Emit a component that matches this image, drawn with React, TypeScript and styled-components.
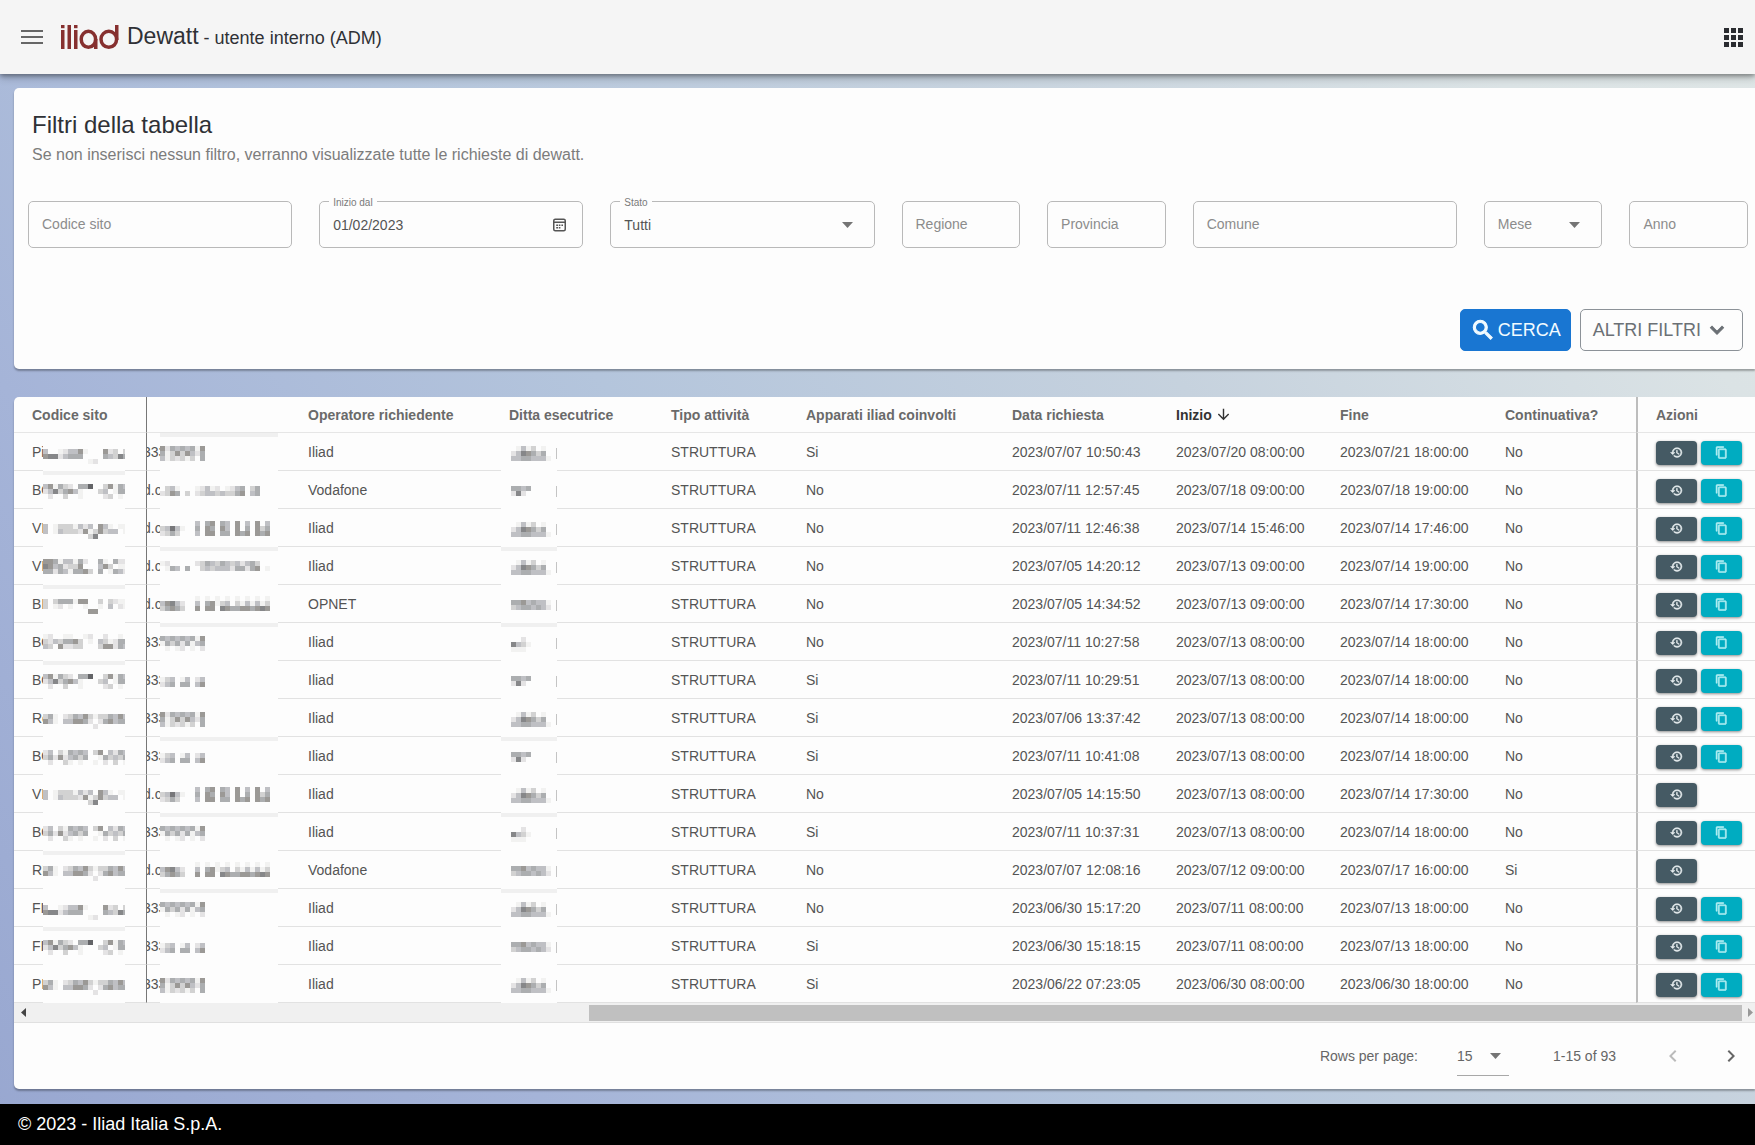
import React from "react";
import styled, { createGlobalStyle } from "styled-components";
import {
  MdArrowDownward,
  MdChevronLeft,
  MdChevronRight,
  MdContentCopy,
  MdExpandMore,
  MdHistory,
  MdSearch,
} from "react-icons/md";

const GlobalStyle = createGlobalStyle`
  *, *::before, *::after { box-sizing: border-box; }
  body {
    margin: 0;
    font-family: "Liberation Sans", Arial, Helvetica, sans-serif;
    font-size: 14px;
    color: #545454;
  }
  button, input, select { font: inherit; color: inherit; }
`;

const Page = styled.div`
  display: flex;
  flex-direction: column;
  min-height: 100vh;
  overflow-x: hidden;
  background: linear-gradient(53deg, #98a7d0 0%, #a5b4d8 22%, #b4c5dc 45%, #c6d2de 67%, #dbe3e5 88%, #dfe6e6 100%);
`;

const TopBar = styled.header`
  display: flex;
  align-items: center;
  height: 74px;
  padding: 0 9px 0 20px;
  background: #f5f5f5;
  box-shadow: 0 2px 4px rgba(0, 0, 0, 0.3), 0 4px 8px rgba(0, 0, 0, 0.2);
`;

const IconButton = styled.button`
  display: flex;
  align-items: center;
  justify-content: center;
  width: 24px;
  height: 24px;
  padding: 0;
  border: 0;
  background: none;
  color: #666;
  cursor: pointer;
  &:disabled { color: #bbb; }
`;

const Logo = styled.svg`
  display: block;
  width: 60px;
  height: 26px;
  margin: 0 7px 0 16px;
`;

const AppName = styled.h1`
  flex: 1;
  margin: 0;
  font-size: 23px;
  font-weight: 400;
  line-height: 28px;
  color: #2f3136;
`;

const UserRole = styled.span`
  font-size: 18px;
`;

const Main = styled.main`
  display: flex;
  flex: 1;
  flex-direction: column;
  gap: 28px;
  padding: 14px 0 15px 14px;
`;

const Card = styled.section`
  overflow: hidden;
  border-radius: 5px 0 0 5px;
  background: #fdfdfd;
  box-shadow: 0 2px 2px rgba(0, 0, 0, 0.3);
`;

const FilterCard = styled(Card)`
  padding: 21px 7px 18px 14px;
`;

const FilterHead = styled.div`
  padding: 0 4px;
`;

const Title = styled.h2`
  margin: 0;
  font-size: 24px;
  font-weight: 400;
  line-height: 32px;
  color: #2f3136;
`;

const Subtitle = styled.p`
  margin: 0;
  font-size: 16px;
  line-height: 28px;
  color: #7c7c7c;
`;

const FilterGrid = styled.div`
  display: grid;
  grid-template-columns: repeat(12, minmax(0, 1fr));
  gap: 27px;
  margin-top: 32px;
`;

const FieldBox = styled.div<{ $span: number }>`
  position: relative;
  grid-column: span ${(p) => p.$span};
`;

const FieldLabel = styled.label<{ $raised?: boolean }>`
  position: absolute;
  left: ${(p) => (p.$raised ? 10 : 14)}px;
  top: ${(p) => (p.$raised ? -5 : 14)}px;
  padding: 0 ${(p) => (p.$raised ? 4 : 0)}px;
  background: #fdfdfd;
  font-size: ${(p) => (p.$raised ? 10 : 14)}px;
  line-height: ${(p) => (p.$raised ? 14 : 18)}px;
  color: ${(p) => (p.$raised ? "#7a7a7a" : "#8c8c8c")};
  pointer-events: none;
`;

const TextInput = styled.input`
  display: block;
  width: 100%;
  height: 47px;
  padding: 0 13px;
  border: 1px solid #b9b9b9;
  border-radius: 5px;
  background: transparent;
`;

const Select = styled.select`
  display: block;
  width: 100%;
  height: 47px;
  padding: 0 32px 0 13px;
  border: 1px solid #b9b9b9;
  border-radius: 5px;
  background: transparent;
  appearance: none;
`;

const FieldIcon = styled.span`
  position: absolute;
  right: 17px;
  top: 0;
  display: flex;
  align-items: center;
  height: 47px;
  color: #555;
  pointer-events: none;
`;

const CaretIcon = styled(FieldIcon)`
  right: 22px;
  color: #757575;
`;

const FilterActions = styled.div`
  display: flex;
  justify-content: flex-end;
  gap: 9px;
  margin-top: 61px;
  padding-right: 5px;
`;

const ActionButton = styled.button<{ $primary?: boolean }>`
  display: flex;
  align-items: center;
  gap: ${(p) => (p.$primary ? 2 : 3)}px;
  height: 42px;
  padding: 0 ${(p) => (p.$primary ? 9 : 12)}px;
  border: 1px solid ${(p) => (p.$primary ? "#1976d2" : "#8c9298")};
  border-radius: 5px;
  background: ${(p) => (p.$primary ? "#1976d2" : "transparent")};
  color: ${(p) => (p.$primary ? "#f2fbff" : "#6b7075")};
  font-size: 18px;
  line-height: 24px;
  text-transform: uppercase;
  cursor: pointer;
  path:not([fill="none"]) { stroke: currentColor; stroke-width: 1; }
`;

const Table = styled.table`
  width: 100%;
  table-layout: fixed;
  border-collapse: separate;
  border-spacing: 0;
`;

const HeadCell = styled.th<{ $sorted?: boolean; $edge?: "left" | "right" }>`
  height: 36px;
  padding: 0 0 0 18px;
  border-bottom: 1px solid #e6e6e6;
  border-right: ${(p) => (p.$edge === "right" ? "1px solid #777" : "0")};
  border-left: ${(p) => (p.$edge === "left" ? "2px solid #bdbdbd" : "0")};
  color: ${(p) => (p.$sorted ? "#333" : "#6a6a6a")};
  text-align: left;
  white-space: nowrap;
`;

const SortLabel = styled.span`
  display: flex;
  align-items: center;
  gap: 3px;
`;

const Cell = styled.td<{ $edge?: "left" | "right"; $flush?: boolean }>`
  position: relative;
  z-index: ${(p) => (p.$edge ? 1 : 0)};
  height: 38px;
  padding: 0 0 0 ${(p) => (p.$flush ? 0 : 18)}px;
  border-bottom: 1px solid #e2e2e2;
  border-right: ${(p) => (p.$edge === "right" ? "1px solid #777" : "0")};
  border-left: ${(p) => (p.$edge === "left" ? "2px solid #bdbdbd" : "0")};
  background: #fdfdfd;
  white-space: nowrap;
`;

const ScrolledText = styled.span`
  display: block;
  margin-left: -4px;
`;

const Mask = styled.svg<{ $left: number }>`
  position: absolute;
  left: ${(p) => p.$left}px;
  top: 0;
  display: block;
`;

const RowActions = styled.div`
  display: flex;
  gap: 4px;
  padding-top: 2px;
`;

const RowButton = styled.button<{ $tone: "slate" | "cyan" }>`
  display: flex;
  align-items: center;
  justify-content: center;
  width: 41px;
  height: 24px;
  padding: 0;
  border: 0;
  border-radius: 4px;
  background: ${(p) => (p.$tone === "slate" ? "#455a64" : "#00acc1")};
  box-shadow: 0 1px 3px rgba(0, 0, 0, 0.45);
  color: ${(p) => (p.$tone === "slate" ? "#e8eef0" : "#b8f0f4")};
  cursor: pointer;
  path:not([fill="none"]) { stroke: currentColor; stroke-width: 1; }
`;

const ScrollBar = styled.div`
  display: flex;
  align-items: center;
  height: 20px;
  border-bottom: 1px solid #e0e0e0;
  background: #f0f0f0;
`;

const ScrollArrow = styled.button<{ $end?: boolean }>`
  display: flex;
  align-items: center;
  justify-content: ${(p) => (p.$end ? "flex-end" : "center")};
  width: ${(p) => (p.$end ? 13 : 18)}px;
  height: 16px;
  padding: 0 ${(p) => (p.$end ? 2 : 0)}px 0 0;
  border: 0;
  background: none;
  color: #444;
  &:disabled { color: #999; }
`;

const ScrollTrack = styled.div`
  display: flex;
  flex: 1;
  justify-content: flex-end;
`;

const ScrollThumb = styled.div`
  height: 16px;
  background: #c0c0c0;
`;

const Pagination = styled.div`
  display: flex;
  align-items: center;
  justify-content: flex-end;
  height: 66px;
  padding-right: 12px;
  color: #666;
`;

const PageSize = styled.div`
  position: relative;
  width: 52px;
  margin: 0 44px 0 39px;
`;

const PageSizeSelect = styled.select`
  display: block;
  width: 100%;
  height: 40px;
  padding: 0;
  border: 0;
  border-bottom: 1px solid #a8a8a8;
  background: transparent;
  appearance: none;
`;

const PageSizeCaret = styled.span`
  position: absolute;
  right: 8px;
  top: 0;
  display: flex;
  align-items: center;
  height: 40px;
  color: #757575;
  pointer-events: none;
`;

const PageButtons = styled.div`
  display: flex;
  gap: 34px;
  margin-left: 45px;
`;

const Footer = styled.footer`
  height: 41px;
  padding: 0 18px;
  background: #000;
  color: #fff;
  font-size: 18px;
  line-height: 41px;
`;

const Caret = () => (
  <svg width="11" height="6" viewBox="0 0 11 6" aria-hidden="true">
    <polygon points="0,0 11,0 5.5,6" fill="currentColor" />
  </svg>
);

const CalendarIcon = () => (
  <svg width="13" height="14" viewBox="0 0 13 14" fill="none" stroke="currentColor" aria-hidden="true">
    <rect x="0.75" y="1.25" width="11.5" height="11.5" rx="1.5" strokeWidth="1.5" />
    <path d="M1 4.2H12" strokeWidth="1.5" />
    <path d="M3.2 7.2H5M5.8 7.2H7.4M8.4 7.2H10M3.2 9.8H5M5.8 9.8H7.4" strokeWidth="1.5" />
  </svg>
);

const IliadLogo = () => (
  <Logo viewBox="0 0 60 26" role="img" aria-label="iliad" fill="#86302f">
    <rect x="1" y="1" width="3.5" height="3.2" />
    <rect x="1" y="6" width="3.5" height="19" />
    <rect x="7.5" y="1" width="3.5" height="24" />
    <rect x="14" y="1" width="3.5" height="3.2" />
    <rect x="14" y="6" width="3.5" height="19" />
    <ellipse cx="28.4" cy="15.3" rx="7.2" ry="8" fill="none" stroke="#86302f" strokeWidth="3.5" />
    <rect x="34" y="15" width="3.5" height="10" />
    <ellipse cx="48.8" cy="15.3" rx="7.8" ry="8" fill="none" stroke="#86302f" strokeWidth="3.5" />
    <rect x="55" y="1" width="3.5" height="15" />
  </Logo>
);

const MenuIcon = () => (
  <svg width="22" height="14" viewBox="0 0 22 14" fill="currentColor" aria-hidden="true">
    <rect width="22" height="2" y="0" />
    <rect width="22" height="2" y="6" />
    <rect width="22" height="2" y="12" />
  </svg>
);

const AppsIcon = () => (
  <svg width="20" height="19" viewBox="0 0 20 19" fill="#2a2c30" aria-hidden="true">
    {[0, 7, 14].map((y) => [0, 7, 14].map((x) => <rect key={`${x}-${y}`} x={x} y={y} width="5" height="5" />))}
  </svg>
);

const greys = ["#fdfdfd", "#f2f2f1", "#e4e3e4", "#d2d2d2", "#bfc0c4", "#acaeb0", "#9b9996", "#868789", "#77777a", "#636467"];

type Pattern = { top: number; rows: string[] };

type PixelMaskProps = { left: number; width: number; inset?: number; pattern: Pattern; band?: boolean; tick?: boolean };

const PixelMask = ({ left, width, inset = 0, pattern, band, tick }: PixelMaskProps) => (
  <Mask $left={left} width={width} height={38} aria-hidden="true">
    <rect width={width} height={38} fill="#fdfdfd" />
    {band && <rect width={width} height={4} fill="#f0f0f0" />}
    {pattern.rows.map((row, y) =>
      [...row].map((d, x) =>
        d === "0" ? null : (
          <rect
            key={`${x}-${y}`}
            x={inset + x * 5}
            y={pattern.top + y * 5}
            width={5}
            height={5}
            fill={greys[Number(d)]}
          />
        ),
      ),
    )}
    {tick && <rect x={width - 1} y={15} width={1} height={11} fill="#c4c4c4" />}
  </Mask>
);

const sitePixels: Record<string, Pattern> = {
  a: { top: 16, rows: ["40012446100062303", "67724555000054375", "00000000012000000"] },
  b: { top: 13, rows: ["46153205590036154", "24735641000340155", "02003001000023010"] },
  c: { top: 15, rows: ["40133314240641011", "40143332613634401", "00000000037000000"] },
  d: { top: 12, rows: ["66514415200510522", "76452336000463011", "55254155630501542"] },
  e: { top: 14, rows: ["30355516600303211", "30120100100104021", "00000000066000000"] },
  f: { top: 11, rows: ["12001100120020010", "32435563010431255", "43062233000366254"] },
  g: { top: 13, rows: ["24031545403604254", "35262453500153435", "02003101001020301"] },
  h: { top: 15, rows: ["35102354631335464", "64104466520256455", "00000000002000000"] },
};

const contactPixels: Record<string, Pattern> = {
  tel1: { top: 13, rows: ["625454516", "513636425", "413231305"] },
  tel2: { top: 16, rows: ["134014024", "245055046"] },
  tel3: { top: 13, rows: ["545454516", "153525145", "010120102"] },
  mail1: { top: 15, rows: ["0341000124120124503500", "2365030234434335604500"] },
  mail2: { top: 12, rows: ["0000000405605406040604", "3484100506506406050635", "2353000406605506560656"] },
  mail3: { top: 11, rows: ["0000000101010101010101", "4674200405613403141413", "3565300606607655665676"] },
  mail4: { top: 14, rows: ["1200000235435434245300", "0154050034344425525601"] },
};

const companyPixels: Record<string, Pattern> = {
  long: { top: 13, rows: ["0141301", "2476535", "44554441"] },
  short: { top: 15, rows: ["5545", "2720"] },
  wide: { top: 15, rows: ["55645441", "34554542"] },
  tiny: { top: 14, rows: ["0020", "7431", "1110"] },
};

type Row = {
  code: string;
  site: string;
  contact: string;
  operator: string;
  company: string;
  devices: string;
  requested: string;
  start: string;
  end: string;
  ongoing: string;
  copy: boolean;
};

const row = (
  code: string,
  site: string,
  contact: string,
  operator: string,
  company: string,
  devices: string,
  requested: string,
  start: string,
  end: string,
  ongoing = "No",
  copy = true,
): Row => ({ code, site, contact, operator, company, devices, requested, start, end, ongoing, copy });

const data: Row[] = [
  row("Pi", "a", "tel1", "Iliad", "long", "Si", "2023/07/07 10:50:43", "2023/07/20 08:00:00", "2023/07/21 18:00:00"),
  row("BO", "b", "mail1", "Vodafone", "short", "No", "2023/07/11 12:57:45", "2023/07/18 09:00:00", "2023/07/18 19:00:00"),
  row("VI", "c", "mail2", "Iliad", "long", "No", "2023/07/11 12:46:38", "2023/07/14 15:46:00", "2023/07/14 17:46:00"),
  row("VI", "d", "mail4", "Iliad", "long", "No", "2023/07/05 14:20:12", "2023/07/13 09:00:00", "2023/07/14 19:00:00"),
  row("BI", "e", "mail3", "OPNET", "wide", "No", "2023/07/05 14:34:52", "2023/07/13 09:00:00", "2023/07/14 17:30:00"),
  row("BO", "f", "tel3", "Iliad", "tiny", "No", "2023/07/11 10:27:58", "2023/07/13 08:00:00", "2023/07/14 18:00:00"),
  row("BO", "b", "tel2", "Iliad", "short", "Si", "2023/07/11 10:29:51", "2023/07/13 08:00:00", "2023/07/14 18:00:00"),
  row("Ro", "h", "tel1", "Iliad", "long", "Si", "2023/07/06 13:37:42", "2023/07/13 08:00:00", "2023/07/14 18:00:00"),
  row("BO", "g", "tel2", "Iliad", "short", "Si", "2023/07/11 10:41:08", "2023/07/13 08:00:00", "2023/07/14 18:00:00"),
  row("VI", "c", "mail2", "Iliad", "long", "No", "2023/07/05 14:15:50", "2023/07/13 08:00:00", "2023/07/14 17:30:00", "No", false),
  row("BO", "g", "tel3", "Iliad", "tiny", "Si", "2023/07/11 10:37:31", "2023/07/13 08:00:00", "2023/07/14 18:00:00"),
  row("RI", "h", "mail3", "Vodafone", "wide", "No", "2023/07/07 12:08:16", "2023/07/12 09:00:00", "2023/07/17 16:00:00", "Si", false),
  row("FI", "a", "tel3", "Iliad", "long", "No", "2023/06/30 15:17:20", "2023/07/11 08:00:00", "2023/07/13 18:00:00"),
  row("FI", "b", "tel2", "Iliad", "wide", "Si", "2023/06/30 15:18:15", "2023/07/11 08:00:00", "2023/07/13 18:00:00"),
  row("PI", "h", "tel1", "Iliad", "long", "Si", "2023/06/22 07:23:05", "2023/06/30 08:00:00", "2023/06/30 18:00:00"),
];

const siteBands = [1, 4, 6, 11, 13];
const contactBands = [0, 3, 5, 8, 10, 12];
const companyBands = [3, 5, 8, 10, 12];
const columnWidths = [133, 143, 201, 162, 135, 206, 164, 164, 165, 149, 119];

/* Share of the scroll track taken by the visible part of the table. */
const visibleShare = 0.674;

type FieldProps = { id: string; label: string; span?: number; value?: string; kind?: "text" | "date" | "select" };

const Field = ({ id, label, span = 1, value = "", kind = "text" }: FieldProps) => (
  <FieldBox $span={span}>
    {kind === "select" ? (
      <Select id={id} defaultValue={value}>
        <option value={value}>{value}</option>
      </Select>
    ) : (
      <TextInput id={id} type="text" defaultValue={value} />
    )}
    <FieldLabel htmlFor={id} $raised={value !== ""}>
      {label}
    </FieldLabel>
    {kind === "date" && (
      <FieldIcon>
        <CalendarIcon />
      </FieldIcon>
    )}
    {kind === "select" && (
      <CaretIcon>
        <Caret />
      </CaretIcon>
    )}
  </FieldBox>
);

export default function App() {
  return (
    <Page>
      <GlobalStyle />
      <TopBar>
        <IconButton type="button" aria-label="Menu">
          <MenuIcon />
        </IconButton>
        <IliadLogo />
        <AppName>
          Dewatt<UserRole> - utente interno (ADM)</UserRole>
        </AppName>
        <IconButton type="button" aria-label="App">
          <AppsIcon />
        </IconButton>
      </TopBar>

      <Main>
        <FilterCard>
          <FilterHead>
            <Title>Filtri della tabella</Title>
            <Subtitle>Se non inserisci nessun filtro, verranno visualizzate tutte le richieste di dewatt.</Subtitle>
          </FilterHead>
          <FilterGrid>
            <Field id="codice" label="Codice sito" span={2} />
            <Field id="inizio" label="Inizio dal" span={2} value="01/02/2023" kind="date" />
            <Field id="stato" label="Stato" span={2} value="Tutti" kind="select" />
            <Field id="regione" label="Regione" />
            <Field id="provincia" label="Provincia" />
            <Field id="comune" label="Comune" span={2} />
            <Field id="mese" label="Mese" kind="select" />
            <Field id="anno" label="Anno" />
          </FilterGrid>
          <FilterActions>
            <ActionButton type="button" $primary>
              <MdSearch size={26} />
              Cerca
            </ActionButton>
            <ActionButton type="button">
              Altri filtri
              <MdExpandMore size={26} />
            </ActionButton>
          </FilterActions>
        </FilterCard>

        <Card>
          <Table>
            <colgroup>
              {columnWidths.map((width, i) => (
                <col key={i} width={width} />
              ))}
            </colgroup>
            <thead>
              <tr>
                <HeadCell $edge="right">Codice sito</HeadCell>
                <HeadCell aria-label="Contatto" />
                <HeadCell>Operatore richiedente</HeadCell>
                <HeadCell>Ditta esecutrice</HeadCell>
                <HeadCell>Tipo attività</HeadCell>
                <HeadCell>Apparati iliad coinvolti</HeadCell>
                <HeadCell>Data richiesta</HeadCell>
                <HeadCell $sorted aria-sort="descending">
                  <SortLabel>
                    Inizio
                    <MdArrowDownward size={17} />
                  </SortLabel>
                </HeadCell>
                <HeadCell>Fine</HeadCell>
                <HeadCell>Continuativa?</HeadCell>
                <HeadCell $edge="left">Azioni</HeadCell>
              </tr>
            </thead>
            <tbody>
              {data.map((r, i) => (
                <tr key={i}>
                  <Cell $edge="right">
                    {r.code}
                    <PixelMask left={29} width={82} pattern={sitePixels[r.site]} band={siteBands.includes(i)} />
                  </Cell>
                  <Cell $flush>
                    <ScrolledText>{r.contact.startsWith("tel") ? "333" : "d.c"}</ScrolledText>
                    <PixelMask left={13} width={118} pattern={contactPixels[r.contact]} band={contactBands.includes(i)} />
                  </Cell>
                  <Cell>{r.operator}</Cell>
                  <Cell>
                    <PixelMask
                      left={10}
                      width={56}
                      inset={10}
                      pattern={companyPixels[r.company]}
                      band={companyBands.includes(i)}
                      tick
                    />
                  </Cell>
                  <Cell>STRUTTURA</Cell>
                  <Cell>{r.devices}</Cell>
                  <Cell>{r.requested}</Cell>
                  <Cell>{r.start}</Cell>
                  <Cell>{r.end}</Cell>
                  <Cell>{r.ongoing}</Cell>
                  <Cell $edge="left">
                    <RowActions>
                      <RowButton type="button" $tone="slate" aria-label="Storico">
                        <MdHistory size={13} />
                      </RowButton>
                      {r.copy && (
                        <RowButton type="button" $tone="cyan" aria-label="Copia">
                          <MdContentCopy size={13} />
                        </RowButton>
                      )}
                    </RowActions>
                  </Cell>
                </tr>
              ))}
            </tbody>
          </Table>
          <ScrollBar>
            <ScrollArrow type="button" aria-label="Scorri a sinistra">
              <svg width="5" height="9" viewBox="0 0 5 9" aria-hidden="true">
                <polygon points="5,0 5,9 0,4.5" fill="currentColor" />
              </svg>
            </ScrollArrow>
            <ScrollTrack>
              <ScrollThumb style={{ width: `${visibleShare * 100}%` }} />
            </ScrollTrack>
            <ScrollArrow type="button" aria-label="Scorri a destra" $end disabled>
              <svg width="5" height="9" viewBox="0 0 5 9" aria-hidden="true">
                <polygon points="0,0 0,9 5,4.5" fill="currentColor" />
              </svg>
            </ScrollArrow>
          </ScrollBar>
          <Pagination>
            <label htmlFor="rows">Rows per page:</label>
            <PageSize>
              <PageSizeSelect id="rows" defaultValue="15">
                <option>15</option>
              </PageSizeSelect>
              <PageSizeCaret>
                <Caret />
              </PageSizeCaret>
            </PageSize>
            <span>1-15 of 93</span>
            <PageButtons>
              <IconButton type="button" aria-label="Pagina precedente" disabled>
                <MdChevronLeft size={26} />
              </IconButton>
              <IconButton type="button" aria-label="Pagina successiva">
                <MdChevronRight size={26} />
              </IconButton>
            </PageButtons>
          </Pagination>
        </Card>
      </Main>

      <Footer>© 2023 - Iliad Italia S.p.A.</Footer>
    </Page>
  );
}
